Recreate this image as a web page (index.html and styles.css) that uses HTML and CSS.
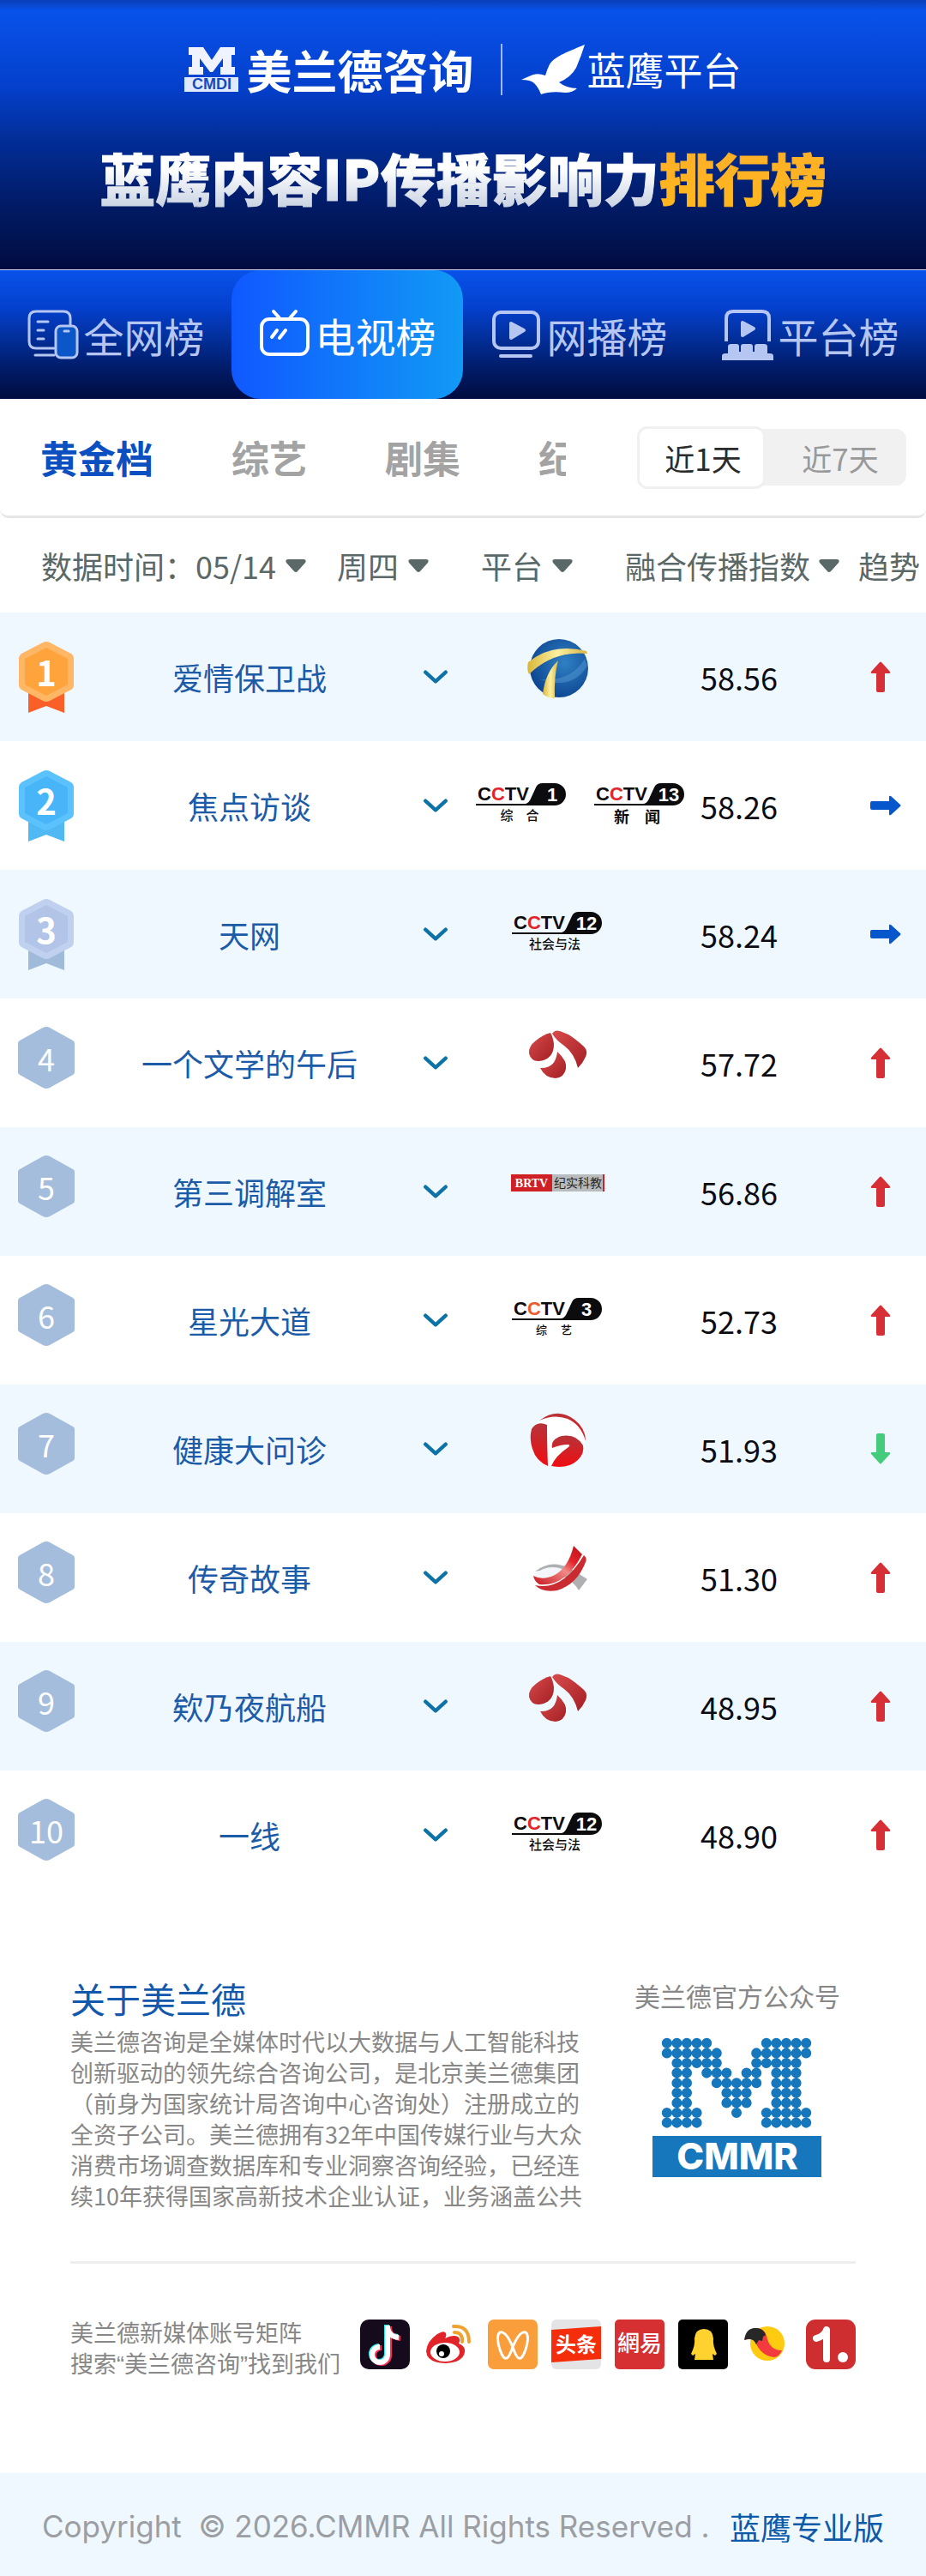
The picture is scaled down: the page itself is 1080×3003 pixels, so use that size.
FILE: index.html
```html
<!DOCTYPE html>
<html lang="zh-CN">
<head>
<meta charset="utf-8">
<meta name="viewport" content="width=device-width, initial-scale=1">
<title>蓝鹰内容IP传播影响力排行榜</title>
<link rel="stylesheet" href="styles.css">
</head>
<body>
<svg class="defs" aria-hidden="true">
  <defs>
    <linearGradient id="ribbon" x1="0" y1="0" x2="1" y2="0"><stop offset="0" stop-color="#d9b63a"/><stop offset=".5" stop-color="#fbf0a0"/><stop offset="1" stop-color="#d8b440"/></linearGradient>
    <radialGradient id="globe" cx=".6" cy=".4" r=".65"><stop offset="0" stop-color="#2f80c4"/><stop offset="1" stop-color="#0c4590"/></radialGradient>
    <linearGradient id="petal" x1="0" y1="0" x2="1" y2="1"><stop offset="0" stop-color="#d94b4b"/><stop offset="1" stop-color="#a31f24"/></linearGradient>
    <linearGradient id="crimson" x1="0" y1="0" x2="0" y2="1"><stop offset="0" stop-color="#b5343a"/><stop offset="1" stop-color="#f00d12"/></linearGradient>
    <linearGradient id="sash" x1="1" y1="0" x2="0" y2="1"><stop offset="0" stop-color="#b5121a"/><stop offset=".3" stop-color="#e3242b"/><stop offset=".5" stop-color="#f08a86"/><stop offset="1" stop-color="#c8141c"/></linearGradient>
  </defs>
  <symbol id="caret" viewBox="0 0 24 15"><path d="M3 0h18q4 0 2 4L14 14q-2 2-4 0L1 4q-2-4 2-4z"/></symbol>
  <symbol id="chevron" viewBox="0 0 28 18"><path d="M3 4l11 10L25 4" fill="none" stroke="#0d72a6" stroke-width="4" stroke-linecap="round" stroke-linejoin="round"/></symbol>
  <symbol id="arrow-up" viewBox="0 0 24 36"><path d="M11 1q1-1 2 0l10 11q1 2-1 2h-5v20q0 2-2 2H9q-2 0-2-2V14H2q-2 0-1-2z"/></symbol>
  <symbol id="arrow-right" viewBox="0 0 36 24"><path d="M35 11q1 1 0 2L24 23q-2 1-2-1v-5H2q-2 0-2-2V9q0-2 2-2h20V2q0-2 2-1z"/></symbol>
  <symbol id="arrow-down" viewBox="0 0 24 36"><path d="M11 35q1 1 2 0l10-11q1-2-1-2h-5V2q0-2-2-2H9Q7 0 7 2v20H2q-2 0-1 2z"/></symbol>
  <symbol id="medal" viewBox="0 0 66 84"><path class="medal-tail" d="M12 56h42v28L33 76 12 84z"/><path class="medal-rim" d="M29 2q4-2 8 0l25 13q3 2 3 5v32q0 3-3 5L37 70q-4 2-8 0L4 57q-3-2-3-5V20q0-3 3-5z"/><path class="medal-face" d="M33 8l25 13v30L33 64 8 51V21z"/></symbol>
  <symbol id="hexagon" viewBox="0 0 66 72"><path d="M29 1q4-2 8 0l27 15q2 1 2 3v34q0 2-2 3L37 71q-4 2-8 0L2 56q-2-1-2-3V19q0-2 2-3z" fill="#a5bddc"/></symbol>
  <symbol id="cctv-pill" viewBox="0 0 110 72"><path d="M1 44h58q4-1 6-6l6-13q2-5 8-5h14a12 12 0 0 1 0 26H1z"/></symbol>
  <symbol id="jstv" viewBox="0 0 110 72"><g fill="url(#petal)"><path d="M46 11q3 5 4 13 0 15-12 19-14 4-17-8-1-8 8-15 9-7 17-9z"/><path d="M48 12q3-5 9-3l10 4q8 5 18 14 5 5 2 12-3 7-9 13-4-17-16-26-9-6-14-14z"/><path d="M54 33q12 11 10 20-2 10-12 11-12 0-18-12 18 1 20-19z"/></g></symbol>
</svg>

<header class="banner">
  <div class="brands">
    <div class="brand brand-main">
      <svg class="brand-mark" viewBox="0 0 64 54" aria-hidden="true"><path d="M5 1h17l10 15L42 1h17v9h-4v14h4v9H42v-9h3V14L33 30h-3L18 14v10h4v9H5v-9h4V10H5z" fill="#eef3ff"/><rect y="36" width="63" height="17" fill="#dfe9ff"/><text class="mark-text" x="32" y="50">CMDI</text></svg>
      <span>美兰德咨询</span>
    </div>
    <div class="brand brand-sub">
      <svg class="bird" viewBox="0 0 76 60" aria-hidden="true"><path d="M74 1C58 8 39 14 33 24q-3 6-5 13-8-3-14-1-3 1-14 6 11 0 15 4 5 5 8 13 11-4 28-2 9 0 14-5-12 0-21-7 14-6 20-17Q70 14 74 1z"/></svg>
      <span>蓝鹰平台</span>
    </div>
  </div>
  <h1 class="title"><span class="title-white">蓝鹰内容IP传播影响力</span><span class="title-gold">排行榜</span></h1>
</header>

<nav class="boards">
  <a class="board" href="#all">
    <svg viewBox="0 0 60 60" fill="none" stroke="currentColor" stroke-width="3" stroke-linecap="round" aria-hidden="true"><path d="M34 46H10q-8 0-8-8V11q0-8 8-8h32q8 0 8 8v8M9 54h22M12 15h12M12 25h7M12 35h7"/><rect x="33" y="20" width="25" height="37" rx="6" fill="#0b57c9"/><path d="M43 26h5"/></svg>
    <span>全网榜</span>
  </a>
  <a class="board is-active" href="#tv">
    <svg viewBox="0 0 60 60" fill="none" stroke="currentColor" stroke-width="4" stroke-linecap="round" aria-hidden="true"><rect x="3" y="12" width="54" height="41" rx="9"/><path d="M17 3l8 9M43 3l-8 9M15 33l6-8M24 34l7-9"/></svg>
    <span>电视榜</span>
  </a>
  <a class="board" href="#web">
    <svg viewBox="0 0 60 60" fill="none" stroke="currentColor" stroke-width="4" stroke-linecap="round" aria-hidden="true"><rect x="4" y="4" width="52" height="42" rx="8"/><path d="M12 55h35"/><path d="M24 17v17l15-9z" fill="currentColor" stroke-linejoin="round"/></svg>
    <span>网播榜</span>
  </a>
  <a class="board" href="#platform">
    <svg viewBox="0 0 60 60" fill="none" stroke="currentColor" stroke-width="4" aria-hidden="true"><path d="M5 38V11q0-8 8-8h34q8 0 8 8v27"/><path d="M24 16v15l13-8z" fill="currentColor" stroke-linejoin="round"/><path d="M0 60v-5q0-3 4-3h3v-8q0-3 4-3h6q3 0 3 3v6h2v-6q0-3 3-3h8q3 0 3 3v6h2v-6q0-3 3-3h8q4 0 4 3v8h3q4 0 4 3v5z" fill="currentColor" stroke="none"/></svg>
    <span>平台榜</span>
  </a>
</nav>

<main>
  <div class="topics">
    <div class="topic-tabs">
      <button class="topic is-active" type="button">黄金档</button>
      <button class="topic" type="button">综艺</button>
      <button class="topic" type="button">剧集</button>
      <button class="topic" type="button">纪实</button>
    </div>
    <div class="range">
      <button class="range-btn is-active" type="button">近1天</button>
      <button class="range-btn" type="button">近7天</button>
    </div>
  </div>

  <table class="rank">
    <colgroup><col class="c-rank"><col class="c-name"><col class="c-more"><col class="c-platform"><col class="c-score"><col class="c-trend"></colgroup>
    <thead>
      <tr>
        <th colspan="3" class="h-date"><div class="pickers">
          <label for="day">数据时间：</label><span class="picker"><select id="day"><option>05/14</option></select><svg class="caret" aria-hidden="true"><use href="#caret"/></svg></span>
          <span class="picker picker-week"><select aria-label="星期"><option>周四</option></select><svg class="caret" aria-hidden="true"><use href="#caret"/></svg></span>
        </div></th>
        <th class="h-platform"><span class="picker"><select aria-label="平台"><option>平台</option></select><svg class="caret" aria-hidden="true"><use href="#caret"/></svg></span></th>
        <th class="h-score"><button class="sort" type="button">融合传播指数<svg class="caret" aria-hidden="true"><use href="#caret"/></svg></button></th>
        <th class="h-trend">趋势</th>
      </tr>
    </thead>
    <tbody>
      <tr>
        <td class="rank-cell"><div class="badge gold"><svg aria-hidden="true"><use href="#medal"/></svg><span>1</span></div></td>
        <td class="name">爱情保卫战</td>
        <td class="more"><button type="button" aria-label="展开"><svg aria-hidden="true"><use href="#chevron"/></svg></button></td>
        <td><div class="logos"><svg viewBox="0 0 110 72" aria-label="天津卫视"><circle cx="56" cy="36" r="34" fill="url(#globe)"/><path d="M86 25Q70 52 34 49 72 62 89 33z" fill="#5aa0d8" opacity=".45"/><path d="M20 29Q48 6 88 16l1 3Q50 15 21 43q-3-5-1-14z" fill="url(#ribbon)"/><path d="M55 27Q50 45 51 71q-8 0-14-5 3-25 18-39z" fill="url(#ribbon)"/></svg></div></td>
        <td class="score">58.56</td>
        <td class="trend up"><svg aria-label="上升"><use href="#arrow-up"/></svg></td>
      </tr>
      <tr>
        <td class="rank-cell"><div class="badge sky"><svg aria-hidden="true"><use href="#medal"/></svg><span>2</span></div></td>
        <td class="name">焦点访谈</td>
        <td class="more"><button type="button" aria-label="展开"><svg aria-hidden="true"><use href="#chevron"/></svg></button></td>
        <td><div class="logos"><svg class="cctv" viewBox="0 0 110 72"><use href="#cctv-pill"/><text class="ch" x="3" y="40">C<tspan class="red">C</tspan>TV</text><text class="no" x="90" y="41">1</text><text class="cap" x="52" y="63">综　合</text></svg><svg class="cctv" viewBox="0 0 110 72"><use href="#cctv-pill"/><text class="ch" x="3" y="40">C<tspan class="red">C</tspan>TV</text><text class="no" x="88" y="41">13</text><text class="cap cap-bold" x="51" y="66">新　闻</text></svg></div></td>
        <td class="score">58.26</td>
        <td class="trend flat"><svg aria-label="持平"><use href="#arrow-right"/></svg></td>
      </tr>
      <tr>
        <td class="rank-cell"><div class="badge silver"><svg aria-hidden="true"><use href="#medal"/></svg><span>3</span></div></td>
        <td class="name">天网</td>
        <td class="more"><button type="button" aria-label="展开"><svg aria-hidden="true"><use href="#chevron"/></svg></button></td>
        <td><div class="logos"><svg class="cctv" viewBox="0 0 110 72"><use href="#cctv-pill"/><text class="ch" x="3" y="40">C<tspan class="red">C</tspan>TV</text><text class="no" x="88" y="41">12</text><text class="cap" x="51" y="63">社会与法</text></svg></div></td>
        <td class="score">58.24</td>
        <td class="trend flat"><svg aria-label="持平"><use href="#arrow-right"/></svg></td>
      </tr>
      <tr>
        <td class="rank-cell"><div class="badge plain"><svg aria-hidden="true"><use href="#hexagon"/></svg><span>4</span></div></td>
        <td class="name">一个文学的午后</td>
        <td class="more"><button type="button" aria-label="展开"><svg aria-hidden="true"><use href="#chevron"/></svg></button></td>
        <td><div class="logos"><svg aria-label="江苏卫视"><use href="#jstv"/></svg></div></td>
        <td class="score">57.72</td>
        <td class="trend up"><svg aria-label="上升"><use href="#arrow-up"/></svg></td>
      </tr>
      <tr>
        <td class="rank-cell"><div class="badge plain"><svg aria-hidden="true"><use href="#hexagon"/></svg><span>5</span></div></td>
        <td class="name">第三调解室</td>
        <td class="more"><button type="button" aria-label="展开"><svg aria-hidden="true"><use href="#chevron"/></svg></button></td>
        <td><div class="logos"><svg viewBox="0 0 110 72"><rect y="26" width="108" height="20" fill="#b9bcbe"/><rect y="26" width="48" height="20" fill="#cf2025"/><path d="M107 26h2v20h-2z" fill="#cf2025"/><text class="brtv" x="24" y="41">BRTV</text><text class="brtv-cap" x="78" y="41">纪实科教</text></svg></div></td>
        <td class="score">56.86</td>
        <td class="trend up"><svg aria-label="上升"><use href="#arrow-up"/></svg></td>
      </tr>
      <tr>
        <td class="rank-cell"><div class="badge plain"><svg aria-hidden="true"><use href="#hexagon"/></svg><span>6</span></div></td>
        <td class="name">星光大道</td>
        <td class="more"><button type="button" aria-label="展开"><svg aria-hidden="true"><use href="#chevron"/></svg></button></td>
        <td><div class="logos"><svg class="cctv" viewBox="0 0 110 72"><use href="#cctv-pill"/><text class="ch" x="3" y="40">C<tspan class="orange">C</tspan>TV</text><text class="no" x="88" y="41">3</text><text class="cap cap-small" x="50" y="62">综　 艺</text></svg></div></td>
        <td class="score">52.73</td>
        <td class="trend up"><svg aria-label="上升"><use href="#arrow-up"/></svg></td>
      </tr>
      <tr>
        <td class="rank-cell"><div class="badge plain"><svg aria-hidden="true"><use href="#hexagon"/></svg><span>7</span></div></td>
        <td class="name">健康大问诊</td>
        <td class="more"><button type="button" aria-label="展开"><svg aria-hidden="true"><use href="#chevron"/></svg></button></td>
        <td><div class="logos"><svg viewBox="0 0 110 72" aria-label="安徽卫视"><circle cx="55" cy="36" r="31" fill="#fff"/><g fill="url(#crimson)"><path d="M33 13Q54-3 74 12q13 10 13 25Q82 18 66 11 50 5 33 13z"/><path d="M24 23q6-10 18-5 0 22 1 48-14-6-18-20-4-12-1-23z"/><path d="M48 45q-2-10 11-14 17-3 25 11 2 9-6 17-12 11-31 7 5-12 20-22 3-3-1-3-8 0-18 4z"/></g></svg></div></td>
        <td class="score">51.93</td>
        <td class="trend down"><svg aria-label="下降"><use href="#arrow-down"/></svg></td>
      </tr>
      <tr>
        <td class="rank-cell"><div class="badge plain"><svg aria-hidden="true"><use href="#hexagon"/></svg><span>8</span></div></td>
        <td class="name">传奇故事</td>
        <td class="more"><button type="button" aria-label="展开"><svg aria-hidden="true"><use href="#chevron"/></svg></button></td>
        <td><div class="logos"><svg viewBox="0 0 110 72" aria-label="江西卫视"><path d="M28 39q17-14 38-5 14 8 23 14l-10 13q-6-11-20-17-13-9-31-5z" fill="#aeb0b2"/><path d="M28 42Q42 30 60 36q4 3-5 8-12 6-25 3z" fill="#f3f7fb"/><path d="M73 9l10 10Q64 57 33 54q-6-4-7-10 11 6 25-1Q67 34 73 9z" fill="url(#sash)"/><path d="M85 20q4 3 2 8-10 26-33 33-17 3-26-6 32 7 57-35z" fill="#c92b31"/></svg></div></td>
        <td class="score">51.30</td>
        <td class="trend up"><svg aria-label="上升"><use href="#arrow-up"/></svg></td>
      </tr>
      <tr>
        <td class="rank-cell"><div class="badge plain"><svg aria-hidden="true"><use href="#hexagon"/></svg><span>9</span></div></td>
        <td class="name">欸乃夜航船</td>
        <td class="more"><button type="button" aria-label="展开"><svg aria-hidden="true"><use href="#chevron"/></svg></button></td>
        <td><div class="logos"><svg aria-label="江苏卫视"><use href="#jstv"/></svg></div></td>
        <td class="score">48.95</td>
        <td class="trend up"><svg aria-label="上升"><use href="#arrow-up"/></svg></td>
      </tr>
      <tr>
        <td class="rank-cell"><div class="badge plain"><svg aria-hidden="true"><use href="#hexagon"/></svg><span>10</span></div></td>
        <td class="name">一线</td>
        <td class="more"><button type="button" aria-label="展开"><svg aria-hidden="true"><use href="#chevron"/></svg></button></td>
        <td><div class="logos"><svg class="cctv" viewBox="0 0 110 72"><use href="#cctv-pill"/><text class="ch" x="3" y="40">C<tspan class="red">C</tspan>TV</text><text class="no" x="88" y="41">12</text><text class="cap" x="51" y="63">社会与法</text></svg></div></td>
        <td class="score">48.90</td>
        <td class="trend up"><svg aria-label="上升"><use href="#arrow-up"/></svg></td>
      </tr>
    </tbody>
  </table>
</main>

<section class="about">
  <div class="intro">
    <div class="intro-text">
      <h2>关于美兰德</h2>
      <p>美兰德咨询是全媒体时代以大数据与人工智能科技创新驱动的领先综合咨询公司，是北京美兰德集团（前身为国家统计局咨询中心咨询处）注册成立的全资子公司。美兰德拥有32年中国传媒行业与大众消费市场调查数据库和专业洞察咨询经验，已经连续10年获得国家高新技术企业认证，业务涵盖公共</p>
    </div>
    <div class="official">
      <p>美兰德官方公众号</p>
      <svg viewBox="0 0 198 164" aria-label="CMMR"><path transform="translate(11 1) scale(1.16)" fill="none" stroke="#1777bd" stroke-width="10.4" stroke-linecap="round" stroke-dasharray="0 10" d="M5 5h40.1M105 5h40.1M5 15h50.1M95 15h50.1M15 25h40.1M95 25h40.1M15 35h10.1M45 35h20.1M85 35h10.1M115 35h20.1M15 45h10.1M55 45h40.1M115 45h20.1M15 55h10.1M65 55h20.1M115 55h20.1M15 65h10.1M65 65h20.1M115 65h20.1M5 75h30.1M75 75h.1M105 75h40.1M5 85h30.1M105 85h40.1"/><rect y="115" width="197" height="48" fill="#1777bd"/><text class="cmmr" x="99" y="154">CMMR</text></svg>
    </div>
  </div>
  <div class="media">
    <p>美兰德新媒体账号矩阵<br>搜索<span class="quote">“</span>美兰德咨询<span class="quote">”</span>找到我们</p>
    <div class="apps">
      <a href="#douyin" aria-label="抖音"><svg viewBox="0 0 58 58"><rect width="58" height="58" rx="10" fill="#150b1c"/><g fill="none" stroke-width="6"><path d="M31 6v34a9 9 0 1 1-9-9M31 9q2 10 13 11" stroke="#2af0ea"/><path d="M34 8v34a9 9 0 1 1-9-9M34 11q2 10 13 11" stroke="#fb2c55"/><path d="M32 7v34a9 9 0 1 1-9-9M32 10q2 10 13 11" stroke="#fff"/></g></svg></a>
      <a href="#weibo" aria-label="微博"><svg viewBox="0 0 58 58"><path d="M3 37Q4 25 16 17q8-5 10-1 1 3-1 6 9-5 15-2 4 3 1 8 8 3 7 10-2 12-22 13Q4 51 3 37z" fill="#e0242a"/><ellipse cx="25" cy="38" rx="17" ry="11" fill="#fff"/><circle cx="23" cy="37" r="8"/><circle cx="21" cy="40" r="3" fill="#fff"/><path d="M36 15q10 0 9 11M35 8q18-1 18 18" fill="none" stroke="#eda32f" stroke-width="4" stroke-linecap="round"/></svg></a>
      <a href="#channels" aria-label="视频号"><svg viewBox="0 0 58 58"><rect width="58" height="58" rx="7" fill="#fa9d3b"/><path d="M29 32Q21 13 14 15q-5 4 0 20 4 12 8 10 3-1 7-13 8-19 15-17 5 4 0 20-4 12-8 10-3-1-7-13z" fill="none" stroke="#fff" stroke-width="3"/></svg></a>
      <a href="#toutiao" aria-label="头条"><svg viewBox="0 0 58 58"><rect width="58" height="58" rx="6" fill="#e4e4e6"/><path d="M0 12l58-4v38L0 50z" fill="#f52d0a"/><text class="app-text" x="29" y="38">头条</text></svg></a>
      <a href="#netease" aria-label="網易"><svg viewBox="0 0 58 58"><rect width="58" height="58" rx="5" fill="#d63033"/><text class="app-text app-thin" x="29" y="37">網易</text></svg></a>
      <a href="#qq" aria-label="企鹅号"><svg viewBox="0 0 58 58"><rect width="58" height="58" rx="5"/><path d="M19 22q1-11 11-11t11 11q-1 8 4 18l-2 2-3-2 1 7H19l1-7-3 2-2-2q5-10 4-18z" fill="#ffd230"/></svg></a>
      <a href="#sohu" aria-label="搜狐"><svg viewBox="0 0 58 58"><ellipse cx="29" cy="28" rx="20" ry="20" fill="#fecb10"/><path d="M3 24Q6 9 17 10q9 1 11 9 3 17 18 17-3 7-9 8-16-2-22-18-3-6-12-2z" fill="#f23a3f"/><path d="M2 24Q4 9 16 10q8 0 11 8l-3 2-1 5-4-1-3 5q-4-9-14-5z" fill="#272727"/></svg></a>
      <a href="#yidian" aria-label="一点号"><svg viewBox="0 0 58 58"><rect width="58" height="58" rx="11" fill="#cf2e30"/><path d="M12 22q10-3 12-10v34" fill="none" stroke="#fff" stroke-width="8" stroke-linecap="round" stroke-linejoin="round"/><circle cx="43" cy="44" r="6" fill="#fff"/></svg></a>
    </div>
  </div>
</section>

<footer class="footer"><span class="copyright">Copyright&nbsp; © 2026.CMMR All Rights Reserved .</span><a href="#pro">蓝鹰专业版</a></footer>
</body>
</html>
```
FILE: styles.css
```css
* { box-sizing: border-box; }

body {
  margin: 0;
  background: #fff;
  color: #333;
  font-family: "Noto Sans CJK SC", "Noto Sans", sans-serif;
}

h1, h2, p { margin: 0; font-weight: 400; }
a { color: inherit; text-decoration: none; }
svg { display: block; flex: none; }

button, select {
  margin: 0;
  padding: 0;
  border: 0;
  background: none;
  color: inherit;
  font: inherit;
  appearance: none;
}

.defs { position: absolute; width: 0; height: 0; }

/* Banner */
.banner {
  display: flex;
  flex-direction: column;
  align-items: center;
  gap: 56px;
  padding: 51px 0 69px;
  border-bottom: 1px solid #c9d6f2;
  background: linear-gradient(#0a3fb8, #0852ea 4%, #0440cc 32%, #022f9c 50%, #011c69 74%, #010c40);
  color: #fff;
}

.brands { display: flex; height: 60px; }
.brand { display: flex; align-items: center; }
.brand-main { gap: 8px; padding-right: 32px; border-right: 2px solid #9db8f5; font-size: 53px; font-weight: 700; line-height: 60px; }
.brand-sub { padding-left: 22px; font-size: 45px; font-weight: 400; line-height: 60px; }
.brand-mark { width: 64px; height: 54px; }
.mark-text { fill: #1749bd; font: 700 18px "Liberation Sans", sans-serif; text-anchor: middle; }
.bird { width: 76px; height: 60px; fill: #fff; }

.title { font-size: 65px; font-weight: 900; line-height: 78px; white-space: nowrap; }
.title-white, .title-gold { background-clip: text; color: transparent; -webkit-text-stroke: 1px transparent; }
.title-white { background-image: linear-gradient(#fff 40%, #cdd6e4 85%); }
.title-gold { background-image: linear-gradient(#ffae2b, #ffb81c); }

/* Board navigation */
.boards {
  display: grid;
  grid-template-columns: repeat(4, 1fr);
  height: 150px;
  background: linear-gradient(#0852ea, #0440cc 30%, #022f9c 52%, #011c69 76%, #010c40);
}

.board { display: flex; align-items: center; justify-content: center; gap: 6px; color: #b5c6f3; font-size: 47px; }
.board svg { width: 60px; height: 60px; }
.board.is-active { border-radius: 34px; background: linear-gradient(90deg, #1058ff, #119af5); color: #fff; }

/* Topic tabs */
.topics {
  display: flex;
  align-items: center;
  gap: 83px;
  height: 139px;
  padding: 0 23px 0 47px;
  border-bottom: 3px solid #e6e6e6;
  border-radius: 0 0 10px 10px;
}

.topic-tabs { display: flex; flex: 1; gap: 91px; min-width: 0; overflow: hidden; }
.topic { flex: none; color: #a3a3a3; font-size: 44px; font-weight: 700; line-height: 80px; }
.topic.is-active { color: #0b4fc0; }

.range { display: flex; align-items: center; width: 314px; height: 66px; border-radius: 12px; background: #f1f1f1; }
.range-btn { flex: 1; height: 66px; padding-left: 10px; color: #999; font-size: 35px; }
.range-btn.is-active { flex: 0 0 150px; height: 73px; padding-left: 4px; border: 3px solid #f0f0f0; border-radius: 12px; background: #fff; color: #2b2b2b; }

/* Ranking table */
.rank { width: 100%; border-collapse: collapse; table-layout: fixed; font-size: 36px; }
.c-rank { width: 108px; }
.c-more { width: 67px; }
.c-platform { width: 220px; }
.c-score { width: 202px; }
.c-trend { width: 117px; }

.rank th { height: 110px; padding: 0; color: #5b6868; font-weight: 400; text-align: left; white-space: nowrap; }
.rank td { height: 150px; padding: 0; }
.rank tbody tr:nth-child(odd) { background: #f0f8ff; }

.pickers { display: flex; align-items: center; }
.picker, .sort { display: inline-flex; align-items: center; gap: 10px; }
.picker-week { margin-left: 36px; }
.caret { width: 24px; height: 15px; fill: #5b6868; }
.rank .h-date { padding-left: 48px; }
.rank .h-platform { padding-left: 20px; }
.rank .h-score { padding-right: 20px; }
.h-score .sort { margin-left: -32px; }
.rank .h-trend { padding-left: 38px; }

.rank .rank-cell { padding: 33px 0 0 21px; vertical-align: top; }
.badge { display: grid; width: 66px; color: #fff; text-align: center; }
.badge > * { grid-area: 1 / 1; }
.badge svg { width: 66px; height: 84px; }
.badge span { line-height: 72px; }
.badge.plain svg { height: 72px; }
.badge:not(.plain) span { font-weight: 700; font-size: 40px; }
.gold { --rim: #ffb665; --face: #ffa43c; --tail: #fa5f28; }
.sky { --rim: #5bc2fd; --face: #48b5f8; --tail: #50b9f3; }
.silver { --rim: #c0d1f0; --face: #b2c5e8; --tail: #a0bbda; }
.medal-rim { fill: var(--rim); }
.medal-face { fill: var(--face); }
.medal-tail { fill: var(--tail); }

.name { color: #1c5ba8; text-align: center; }
.more button { display: block; margin: 0 auto; }
.more svg { width: 30px; height: 20px; }
.score { color: #0b0b12; text-align: center; }

.logos { display: flex; justify-content: safe center; gap: 28px; padding: 0 13px 20px; }
.logos svg { width: 110px; height: 72px; }
.cctv { fill: #0c0c0e; }
.ch { font: 700 22px "Liberation Sans", sans-serif; }
.no { fill: #fff; font: 700 22px "Liberation Sans", sans-serif; text-anchor: middle; }
.cap { font-size: 15px; font-weight: 500; text-anchor: middle; }
.cap-bold { font-size: 18px; font-weight: 700; }
.cap-small { font-size: 13px; }
.red { fill: #e5232b; }
.orange { fill: #ee5a2e; }
.brtv { fill: #fff; font: 700 14px "Liberation Serif", serif; text-anchor: middle; }
.brtv-cap { fill: #26282a; font-size: 14px; text-anchor: middle; }

.trend svg { margin-left: 52px; }
.up svg, .down svg { width: 24px; height: 36px; }
.up svg { fill: #d63036; }
.down svg { fill: #45cb7c; }
.flat svg { width: 36px; height: 24px; fill: #0656cc; }

/* About */
.about { padding: 89px 82px 110px; color: #878787; font-size: 27px; line-height: 36px; }
.intro { display: flex; justify-content: space-between; padding-bottom: 58px; border-bottom: 3px solid #eee; }
.intro-text { width: 600px; }
.intro h2 { margin-bottom: 7px; color: #1259ad; font-size: 41px; line-height: 52px; }
.official { display: flex; flex-direction: column; align-items: center; width: 276px; }
.official p { font-size: 30px; line-height: 46px; white-space: nowrap; }
.official svg { width: 198px; height: 164px; margin-top: 26px; }
.cmmr { fill: #fff; font: 800 43px Inter, sans-serif; text-anchor: middle; }

.media { display: flex; justify-content: space-between; align-items: flex-start; gap: 20px; padding-top: 62px; }
.media p { white-space: nowrap; }
.quote { font-family: "Liberation Sans", sans-serif; line-height: 0; }
.apps { display: flex; flex: 0 0 578px; justify-content: space-between; padding-top: 3px; }
.apps svg { width: 58px; height: 58px; }
.app-text { fill: #fff; font-size: 24px; font-weight: 700; text-anchor: middle; }
.app-thin { font-weight: 500; font-size: 26px; }

/* Footer */
.footer {
  display: flex;
  align-items: center;
  justify-content: space-between;
  min-height: 120px;
  padding: 4px 49px 0;
  background: #f0f8ff;
  color: #9b9fa4;
  font-size: 36px;
  white-space: nowrap;
}
.copyright { font-family: Inter, sans-serif; font-size: 35px; }
.footer a { color: #0c5aa8; }
```
